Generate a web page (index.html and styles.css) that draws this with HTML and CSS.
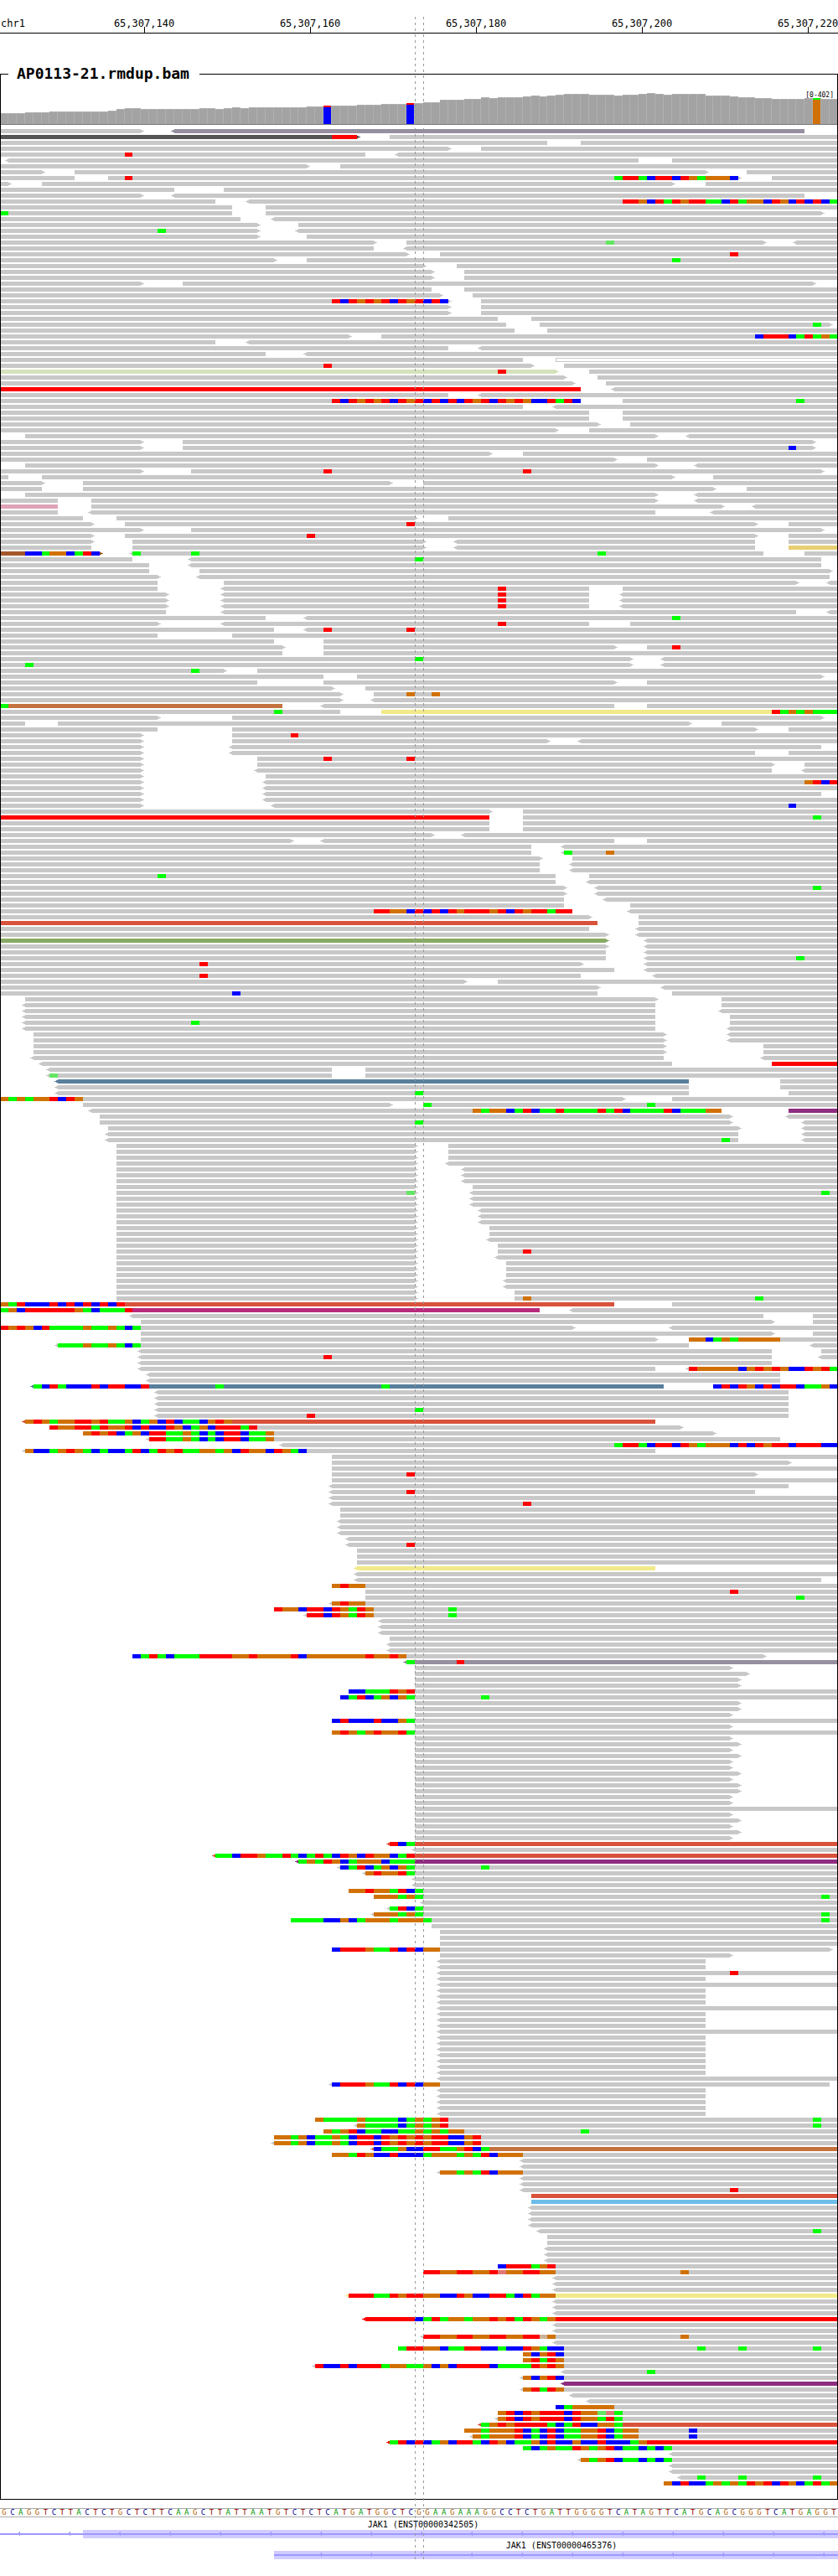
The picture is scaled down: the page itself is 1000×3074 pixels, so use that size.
FILE: index.html
```html
<!DOCTYPE html>
<html lang="en">
<head>
<meta charset="utf-8">
<title>chr1 - AP0113-21.rmdup.bam</title>
<link rel="stylesheet" href="styles.css">
</head>
<body>
<main class="browser">
  <header class="ruler">
    <span class="chrom">chr1</span>
    <span class="tick">65,307,140</span>
    <span class="tick">65,307,160</span>
    <span class="tick">65,307,180</span>
    <span class="tick">65,307,200</span>
    <span class="tick">65,307,220</span>
  </header>

  <fieldset class="track">
    <legend>AP0113-21.rmdup.bam</legend>
    <div class="coverage">
      <svg id="coverage" class="plot" viewBox="1 100 998 49" height="49" preserveAspectRatio="none" role="img" aria-label="Coverage"></svg>
      <span class="range">[0-402]</span>
    </div>
    <svg id="reads" class="plot reads" preserveAspectRatio="none" role="img" aria-label="Aligned reads"></svg>
  </fieldset>

  <div class="sequence" id="sequence"></div>

  <section class="gene">
    <h2 class="gene-name first">JAK1 (ENST00000342505)</h2>
    <svg class="plot model" data-from="0" data-exon="99" viewBox="0 0 1000 10" height="10" preserveAspectRatio="none"></svg>
  </section>
  <section class="gene">
    <h2 class="gene-name second">JAK1 (ENST00000465376)</h2>
    <svg class="plot model" data-from="327" data-exon="327" viewBox="0 0 1000 10" height="10" preserveAspectRatio="none"></svg>
  </section>

  <div class="cursor"></div>
</main>
<script src="tracks.js"></script>
</body>
</html>
```
FILE: styles.css
```css
* {
  box-sizing: border-box;
}

body {
  margin: 0;
  background: #fff;
  color: #000;
  font-family: "DejaVu Sans Mono", monospace;
}

.browser {
  position: relative;
  padding-bottom: 20px;
  overflow: hidden;
}

.ruler {
  display: grid;
  grid-template-columns: 7.3% repeat(5, 19.8%);
  height: 40px;
  padding-top: 20px;
  border-bottom: 1px solid #000;
  font-size: 12px;
  line-height: 16px;
  overflow: hidden;
}

.chrom {
  padding-left: 1px;
}

.tick {
  display: flex;
  flex-direction: column;
  align-items: center;
}

.tick::after {
  content: "";
  width: 1px;
  height: 8px;
  margin-top: -4px;
  background: #000;
}

.track {
  min-width: 0;
  margin: 36px 0 0;
  padding: 0 0 14px;
  border: 1px solid #000;
}

.track legend {
  margin-left: 9px;
  padding: 0 12px 0 10px;
  font-size: 18px;
  font-weight: bold;
  line-height: 24px;
}

.plot {
  display: block;
  width: 100%;
  shape-rendering: crispEdges;
}

.coverage {
  position: relative;
}

.range {
  position: absolute;
  top: 9px;
  right: 4px;
  font-size: 8px;
  line-height: 10px;
}

.reads {
  margin-top: 5px;
}

.sequence {
  display: grid;
  grid-template-columns: repeat(101, 1fr);
  margin-top: 10px;
  border: solid #aaa;
  border-width: 1px 0;
  font-size: 9px;
  line-height: 9px;
  text-align: center;
}

.base-A { color: #009600; }
.base-C { color: #000096; }
.base-G { color: #b45f06; }
.base-T { color: #960000; }

.gene {
  margin-top: 3px;
}

.gene-name {
  margin: 0;
  font-size: 10px;
  font-weight: normal;
  line-height: 12px;
  text-align: center;
}

.first {
  padding-left: 1%;
}

.second {
  padding-left: 34%;
}

.cursor {
  position: absolute;
  top: 20px;
  bottom: 20px;
  left: 49.5%;
  width: 11px;
  background:
    repeating-linear-gradient(#999 0 3px, transparent 3px 7px) 0 0 / 1px 100% no-repeat,
    repeating-linear-gradient(#999 0 3px, transparent 3px 7px) 10px 0 / 1px 100% no-repeat;
}
```
FILE: tracks.js
```js
const BASES = 101;
const ROW = 7;
const at = n => Math.floor(9.9 * n + 0.5);
const rect = (x, y, w, h, fill) =>
  `<rect x="${x}" y="${y}" width="${w}" height="${h}" fill="${fill}"/>`;

/* Coverage: "top y * number of bases", with base colours where alleles differ. */
const coverage = `135*3 134*3 133*7 132 130 129*2 130*7 129*2 130 129 128 129 128*7
127*2 126*4 125*3 124*3 123*2 122*2 119*3 118*2 116 117 116*3 115 114 115 114 113
112*3 113*3 114 113*2 112 111 112 113 112*4 114*3 115 116*2 117*2 118*4 117*2 118*2`;
const alleles = { 39: ["#ff0000", "#0000ff"], 49: ["#ff0000", "#0000ff"], 98: ["#00ff00", "#d17105"] };

let base = 0;
let bars = "";
for (const run of coverage.split(/\s+/)) {
  const [top, count = 1] = run.split("*").map(Number);
  for (let i = 0; i < count; i++, base++) {
    const x = at(base);
    const w = at(base + 1) - x;
    bars += rect(x, top, w, 148 - top, "#b0b0b0");
    if (alleles[base]) {
      bars += rect(x, top, w - 1, 2, alleles[base][0]);
      bars += rect(x, top + 2, w - 1, 146 - top, alleles[base][1]);
    } else {
      bars += rect(x, top + 1, w - 1, 147 - top, "#a3a3a3");
    }
  }
}
bars += rect(0, 148, 1000, 1, "#777777");
document.getElementById("coverage").innerHTML = bars;

/*
 * Reads, one row per line, in base columns.
 *   [<]start-end[colour][>]   a read, with its strand arrow
 *   column + letters          mismatched bases from that column on
 *   Nx at the start           the row is repeated N times
 */
const readColours = {
  "": "#c8c8c8", s: "#968fa0", D: "#555555", g: "#d6e2bc", r: "#ff0000", k: "#dfa3b8",
  n: "#a5572a", c: "#c4733f", y: "#f2ea8a", Y: "#e8cf74", t: "#d9523b", G: "#8aaa64",
  b: "#587f9c", p: "#8e2d80", m: "#ba2a7c", u: "#6dbde8", w: "#ffffff"
};
const markColours = {
  R: "#ff0000", G: "#00ff00", B: "#0000ff", O: "#d17105",
  r: "#e07878", g: "#64e664", o: "#ccb299"
};
const reads = `-17> <21-97s
-43D> 47- 40RRR
-66 70-
-54> 58-
-44 <48- 15R
<1-77 81-
-37> 41-
-5> 9-85> 90-
-9 13-89> 93- 15R 74GRRGBRRBROGOOOB
-1> 5-81> 85-
-21 27-
-17> <21-97
-26 <30- 75RROBRGRORRGGBRGOOBROBRBRBG
-28 32-
-28 32-99> 0G
-29 <33-
-31> 36-
-31> <36- 19G
-31> 37-
-45> 49-92> <96- 73g
-45 <49-
-49> 53- 88R
-33> 37- 81G
-51> 55-
2x -52> 56-
-17> 22-98>
-52 56-
-53> 57-
-54> 58- 40RBRORORBRORBRB
2x -54> 58-
-60 64-
-61 65-100> 98G
-62 66-
-42> 46- 91BRRRBGRGOG
-26 <30-
-54 <58-
-32 <37-
-63 67-w
-64> 68- 39R
-67g> 71- 60R
-68> 72-
-69> 73-
-70r <74-
-54 <58-
-70 75- 40RBRORORBRORBRBRBRORBROROBBRGRB 96G
-63 <67-
2x -71 75-
-72> 76-
-67> 71-
3-79> <83-
-17> 22-98>
-17> 22-98> 95B
-59> 63-
-74> 78-
3-79> <84-
-17> 23-99> 39R 63R
-1 5-81> 86-
-5> 10-47> 51-
-5 10-86> 90-
3-79> <84-
-7 11-79> <84-
-7k 11-87> <91-
-7 <11-79 <86-
-10 14-50> 54-
-11> 15-91> 95- 49R
-17> 23-99>
-11> 15-91> 95- 37R
-11> 16-51> <55-91 95-
-11 16-51> <55-91 95-Y
-12n> <16-92 97- 3BBGOOBGRB 16G 23G 72G
-16 <23-99 50G
-18 <23-99
-18 24-100>
-19> <24-100
-19 27-96> <100-
-19 <27-71 75- 60R
3x -20> <27-71 <75- 60R
-20 <27-96 <100-
-32 <37- 81G
-19> <27-71 76- 60R
-33 <37- 39R 49R
-19 28-
-33 39-
-34> 39-74> 78- 81R
-34 39-
-76> <80- 50G
-76> <80- 3G
-27> 31- 23G
-39 43-99>
-31 39-74> 78-
-40> 44-
-41> 45- 49O 52O
-41> <45-
-34c <39-74 78- 0G
-41 46-y 33G 93RGOGOGGG
-19> 28-99>
-3 7-83> 87-
-19 28-91> 95-
-17> 28- 35R
-17> 28-66> <70-
-17> <28-99
-17> <28-91 95-
-17> 31- 39R 49R
-17> 31-93> 97-
-17> <31-93 <97-
-17> 32-
-17> <32- 97ORBR
-17> <32-
-17> <32-99
-17> <32-
-17> <33- 95B
-59> 63-
-59r 63- 98G
2x -59 63-
-52> <56-
-35> <39-74 78-
-64 <68-
-64 <68- 68G 73O
-65> 69-
2x -65 <69-
-67 71- 19G
-67 <71-
-68> <72- 98G
-68> <72-
-68 <73-
-68 76-
-69 <76- 45RROOBRBRBRORRRORBRORRGRR
-71> 77-
-72t 77-
-71 <77-
-73> <77-
-73G> <78-
-73> <78-
-73 <78-
-73 <78- 96G
-70> <78- 24R
-74 <78-
-70 <79- 24R
-56> 60-
-72> <80-
-72 81- 28B
3-79> 87-
<3-79 87-
<3-79 <87-
<3-79 88-
<3-79 88- 23G
<3-79 <88-
2x 4-80> <88-
2x 4-80> 92-
<4-80 <92-
<5-81 93-r
<6-40 44-
<6-40 44- 6g
<7-83b 94-
<7-83 94-
<7-83 95- 50G
-75> 81- 0OGOGOORBRO
10-47> 51- 51G 78G
<11-87 95-p 57OGOOBGRBGGRGGGGRGRBGGGGRBGGGOO
12-88> <95-
12-88> <97- 50G
13-89> <97-
<13-89 <97-
<13-89 <97- 87G
3x 14-50> 54-
14-50> <54-
3x 14-50> <56-
14-50> 57-
14-50> <57- 49g 99G
2x 14-50> <57-
3x 14-50> <58-
2x 14-50> 59-
14-50> <59-
14-50> 60-
14-50> 60- 63R
14-50> <60-
3x 14-50> 61-
2x 14-50> <61-
14-50> 62-
14-50> 62- 63O 91G
-74t 81- 0OGRBBBRBRBRBRBR
-65m <69- 0GOBRRRRRROGBGGGR
<16-92 98-
17-93> 98-
-69> <81- 0ROROBRGGGGOGGOGBG
17-93> 98-
17-79> 83- 83OOBGOGOOOOO
<7-83 <98- 7GGGOGGOGBG
<17-93 99-
<17-93 <99- 39R
<17-93
<17-79 <83- 83ROOOOOBOROROBBRORG
2x <18-94
<4-80b 86- 4GBRGBBBRBRRBBR 26G 46G 86BRBROBRBRRBGGOB
3x <19-95
<19-95 50G
<19-95 37R
<3-79t 3OROGOORRORGGOBGOBRBGGBORO
6-82> 6ROORRGROORBRBBROBGOBRRRGR
10-86> 10ORORBGOBRRGGOGBGBRRBGGO
<18-94 18RRGGOGBGBRRBGGO
<34- 74GRRGBRRBROGOOOBRBRORRBRRRBB
<3-79 3OBBGOROGBGBBGRBGRORGGOOGOBROOBROGB
40-
40-95>
40-
40-91> 49R
40-
<40-95
<40-91 49R
<40-
<40- 63R
2x 41-
3x <41-
<42-
<42- 49R
3x 43-
<43-79y
<43-
<43-99
40- 40OROO
44- 88R
44- 96G
<40- 40OROO
33- 33ROOBRRBROGRO 54G
<37- 37RRBROGRO 54G
3x <46-
47-
2x <47-
16-92> 16BGRGBGGGRRRROOROOOORBOOOOOOOROORO
<49-s 49G 55R
50-88>
50-90>
2x 50-89>
42- 42BBGGGROR
41- 41BGRBGOBOG 58G
2x 50-89>
50-88>
40- 40BRBBBRBBOG
50-88>
40- 40OROGOROORG
50-88>
50-89>
50-88>
50-89>
2x 50-88>
50-89>
50-88>
2x 50-89>
2x 50-88>
50-
50-88>
50-89>
50-88>
50-89>
50-88>
<47-t 47RBG
<50-
<26-t 26GGBRROGGRGBGRGBROBROOBGR
<36-p 36GOGROBGOOOBGGG
<41- 41BGRBGOBOG 58G
<44- 44OROORG
2x <50-
42- 42OOROOGRBG
45- 45OOOGOG 99G
<51-
<47- 47GRBG
<45- 45OOOGOG 99G
35- 35GGGGBBOBGOOOGOOOG 99G
52-
3x 53-
40-100> 40BRRROGGRBRBOO
53-88>
2x <53-85
<53- 88R
<53-85
<53-
3x <53-85
<53-
3x <53-85
<53-
7x <53-85
<53-
<40-100 40BRRROGGRBRBOO
5x <53-85
38- 38OGGGGOGGGGBGOGOR 98G
<43- 43OGGGGBGOGOR 98G
39- 39OGORBGGBBGGOGOGOO 70G
33- 33OOGOBGGOGBRRBRORORORRBBOR
<33- 33OOGOBGGOGBRRBRORORORRBBOR
<45-c 45BGGOBBRRGGORBG
40- 40OOGROBBRBBBGOOOGOGRBOOO
2x <63-
<53- 53OOGOGRBOOO
2x <63-
<63- 88R
64-t
64-u
4x <64-
<65- 98G
2x 66-
3x <66-
60- 60BRRRGOR
51- 51RROORROORrOORROO 82O
3x <67-
<42-y 42RRRGGRORROOBBROBBRRGBRGOO
3x <67-
<44-r 50BGRGOOGOORORGROGO
2x <67-
<51- 51RROORROORROORRoO 82O
<67-
48- 48GRROOBGGRRBBGBBROGBB 84G 89G 98G
63- 63OBORB
63- 63ORGRO
<38- 38RBBRBRRRGOOGGOBOBRRRRBGGGGRORO
<68- 78G
<63- 63OBORB
<68-p
<63- 63ORGRO
<69-
<71-
67- 67BGOOOOO
60- 60ORBRORRRBROOgrG
<60- 60ORBRORRRBROOGRG
<58-t 58GORORRRRGBGRBBOOG
56- 56OOGOOORBGBRBGGOORBGOO 83B
<57- 57OGOOORBGBRBGGOORBGOO 83B
<47-r 47GRBRBGOBRRGBROBGGOBRBBOBBRBBBGO
63- 63GBGOGGROGORBGGBGBG
<81-
<70- 70OGORBGGBGBG
2x <81-
<82- 84G 89G 98G
80- 80OBRBBGOGOGRORBROBGRGO`;

let y = 0;
let shapes = "";
for (const line of reads.split("\n")) {
  const [, times = 1, body] = line.match(/^(?:(\d+)x )?(.*)$/);
  for (let i = 0; i < times; i++, y += ROW) {
    for (const token of body.split(" ")) {
      const read = token.match(/^(<?)(\d*)-(\d*)([a-zA-Z]?)(>?)$/);
      if (read) {
        const x1 = at(Number(read[2] || 0));
        const x2 = at(Number(read[3] || BASES));
        const fill = readColours[read[4]];
        if (read[4] === "w") {
          shapes += rect(x1, y, x2 - x1, 5, readColours[""]);
          shapes += rect(x1 + 1, y + 1, x2 - x1, 3, fill);
          continue;
        }
        shapes += rect(x1, y, x2 - x1, 5, fill);
        if (read[1]) shapes += rect(x1 - 2, y + 1, 2, 3, fill) + rect(x1 - 4, y + 2, 2, 1, fill);
        if (read[5]) shapes += rect(x2, y + 1, 2, 3, fill) + rect(x2 + 2, y + 2, 2, 1, fill);
      } else {
        const [, start, letters] = token.match(/^(\d+)([A-Za-z]+)$/);
        [...letters].forEach((letter, j) => {
          const n = Number(start) + j;
          shapes += rect(at(n), y, at(n + 1) - at(n), 5, markColours[letter]);
        });
      }
    }
  }
}
const plot = document.getElementById("reads");
plot.setAttribute("viewBox", `1 0 998 ${y}`);
plot.setAttribute("height", y);
plot.innerHTML = shapes;

const sequence = "GCAGGTCTTACTCTGCTCTTCAAGCTTATTAATGTCTCTCATGATGGCTCGGAAGAAAGGCCTCTGATTGGGGTCATAGTTCATGCAGCGGGTCATGAGGT";
document.getElementById("sequence").innerHTML =
  [...sequence].map(b => `<span class="base-${b}">${b}</span>`).join("");

/* Gene models: exon block, intron line and strand arrows every 60 units. */
for (const model of document.querySelectorAll(".model")) {
  const from = Number(model.dataset.from);
  const exon = Number(model.dataset.exon);
  let parts = rect(exon, 0, 1000 - exon, 10, "#d1ccff") + rect(from, 4, 1000 - from, 2, "#9d98ff");
  for (let x = 23; x < 1000; x += 60) {
    if (x > from) parts += `<path d="M${x + 1} 1L${x - 2} 5L${x + 1} 8Z" fill="#a09bff"/>`;
  }
  model.innerHTML = parts;
}
```
